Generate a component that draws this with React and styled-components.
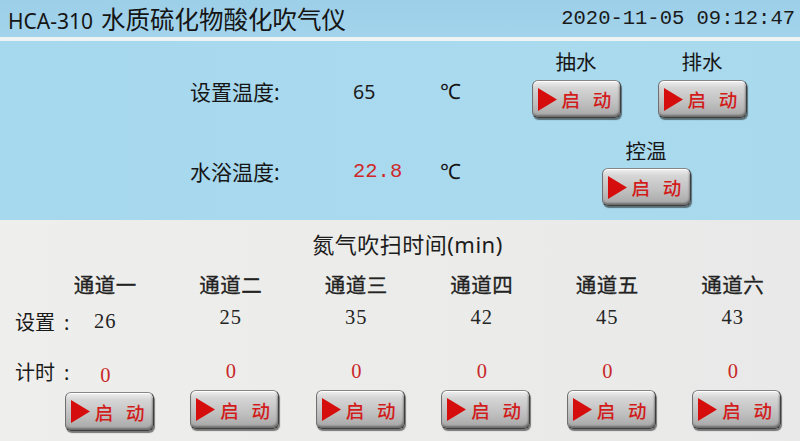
import React from "react";
import styled, { createGlobalStyle } from "styled-components";

const Global = createGlobalStyle`
  html, body { margin: 0; padding: 0; }
  body { width: 800px; height: 441px; overflow: hidden; background: #ecedec; }
`;

const CJK = `"Noto Sans", "Noto Sans CJK SC", sans-serif`;

const Screen = styled.div`
  width: 800px;
  height: 441px;
  display: flex;
  flex-direction: column;
  font-family: ${CJK};
  color: #141414;
`;

const Header = styled.header`
  height: 37px;
  flex: none;
  background: linear-gradient(#9ccfe8, #a3d4ec);
  display: flex;
  align-items: center;
  justify-content: space-between;
  padding: 0 5px 0 8px;
`;

const Title = styled.h1`
  margin: 0;
  font-size: 24.5px;
  font-weight: 400;
  color: #151515;
  white-space: nowrap;
`;

const Model = styled.span`
  font-size: 21px;
  margin-right: 8px;
`;

const Clock = styled.div`
  font-family: "Liberation Mono", monospace;
  font-size: 20.5px;
  color: #1a1a1a;
`;

const Stripe = styled.div`
  height: 4px;
  flex: none;
  background: #eef3f4;
`;

const TopPanel = styled.section`
  height: 179px;
  flex: none;
  background: linear-gradient(90deg, #a6d8ee, #aadaee 70%, #a9d9ec);
  display: flex;
  padding-left: 190px;
`;

const TempGrid = styled.div`
  width: 341px;
  display: grid;
  grid-template-columns: 163px 87px 91px;
  grid-template-rows: 40px 40px;
  row-gap: 40px;
  align-items: center;
  align-content: start;
  padding-top: 30px;
`;

const Label = styled.span`
  font-size: 21px;
  color: #161616;
  white-space: nowrap;
`;

const Reading = styled.span`
  font-family: ${(p) => (p.$mono ? `"Liberation Mono", monospace` : `"Noto Sans", sans-serif`)};
  font-size: ${(p) => (p.$mono ? "20.5px" : "19.5px")};
  color: ${(p) => (p.$alert ? "#d0272a" : "#1b1b1b")};
`;

const Unit = styled.span`
  font-size: 21px;
  color: #161616;
`;

const ControlGrid = styled.div`
  display: grid;
  grid-template-columns: 90px 90px;
  column-gap: 36px;
  row-gap: 22px;
  align-content: start;
  padding-top: 10px;
`;

const Control = styled.div`
  display: flex;
  flex-direction: column;
  align-items: center;
  gap: ${(p) => (p.$wide ? "6px" : "7px")};
  ${(p) => (p.$wide ? "grid-column: 1 / span 2; justify-self: center; margin-left: 14px;" : "")}
`;

const ControlLabel = styled.span`
  font-size: 20.5px;
  line-height: 22px;
  color: #161616;
`;

const StartButton = styled.button`
  width: 89px;
  height: ${(p) => (p.$tall ? "39px" : "38px")};
  padding: 0 0 0 5px;
  box-sizing: border-box;
  border: 1px solid #3e3e3e;
  border-top-color: #858585;
  border-left-color: #707070;
  border-radius: 6px;
  background: linear-gradient(#f0f0f0 0%, #d6d6d6 18%, #c0c0c0 60%, #a6a6a6 100%);
  box-shadow: inset 0 1px 0 #ffffff, inset -1px -2px 2px rgba(0, 0, 0, 0.35),
    1px 2px 1px rgba(40, 40, 40, 0.6);
  display: flex;
  align-items: center;
  gap: 5px;
  font-family: ${CJK};
  cursor: pointer;
`;

const PlayIcon = styled.svg`
  width: 19px;
  height: 23px;
  flex: none;
`;

const StartText = styled.span`
  font-size: 18.5px;
  font-weight: 500;
  letter-spacing: 4px;
  color: #d21c1c;
  white-space: nowrap;
`;

const Start = ({ tall }) => (
  <StartButton $tall={tall}>
    <PlayIcon viewBox="0 0 19 23">
      <polygon points="0,0 19,11.5 0,23" fill="#d60d0d" />
    </PlayIcon>
    <StartText>启 动</StartText>
  </StartButton>
);

const BottomPanel = styled.section`
  flex: 1;
  background: linear-gradient(90deg, #eeeeec, #ebecea 60%, #e8e9e8);
  display: flex;
  flex-direction: column;
  padding-left: 15px;
`;

const SectionTitle = styled.h2`
  margin: 0;
  height: 46px;
  line-height: 48px;
  text-align: center;
  font-size: 22px;
  font-weight: 400;
  letter-spacing: 0.5px;
  color: #1c1c1c;
`;

const ChannelGrid = styled.div`
  display: grid;
  grid-template-columns: 27.5px repeat(6, 125.5px);
  grid-template-rows: 36px 30px 54px 46px;
  justify-items: center;
`;

const RowLabel = styled.span`
  justify-self: start;
  align-self: ${(p) => p.$align || "center"};
  font-size: 20px;
  white-space: nowrap;
  color: #1a1a1a;
  margin-top: ${(p) => p.$shift || 0}px;
`;

const Colon = styled.span`
  margin-left: 9px;
  font-family: "Noto Sans", sans-serif;
`;

const ChannelName = styled.span`
  align-self: center;
  font-size: 20.5px;
  font-weight: 400;
  letter-spacing: 0.5px;
  color: #222;
  -webkit-text-stroke: 0.3px #222;
`;

const SetValue = styled.span`
  align-self: center;
  font-family: "Liberation Serif", serif;
  font-size: 20.5px;
  letter-spacing: 1px;
  color: #252525;
  margin-top: ${(p) => (p.$low ? 8 : 0)}px;
`;

const TimerValue = styled.span`
  align-self: end;
  height: 30px;
  line-height: 30px;
  font-family: "Liberation Serif", serif;
  font-size: 20.5px;
  color: #c9282a;
  margin-bottom: ${(p) => (p.$low ? -4 : 0)}px;
`;

const ButtonCell = styled.div`
  align-self: end;
  margin-left: 8px;
  margin-bottom: ${(p) => (p.$low ? 1 : 3)}px;
`;

const channels = [
  { name: "通道一", set: 26, t: 0 },
  { name: "通道二", set: 25, t: 0 },
  { name: "通道三", set: 35, t: 0 },
  { name: "通道四", set: 42, t: 0 },
  { name: "通道五", set: 45, t: 0 },
  { name: "通道六", set: 43, t: 0 },
];

export default function App() {
  return (
    <>
      <Global />
      <Screen>
        <Header>
          <Title>
            <Model>HCA-310</Model>水质硫化物酸化吹气仪
          </Title>
          <Clock>2020-11-05 09:12:47</Clock>
        </Header>
        <Stripe />
        <TopPanel>
          <TempGrid>
            <Label>设置温度:</Label>
            <Reading>65</Reading>
            <Unit>℃</Unit>
            <Label>水浴温度:</Label>
            <Reading $mono $alert>22.8</Reading>
            <Unit>℃</Unit>
          </TempGrid>
          <ControlGrid>
            <Control>
              <ControlLabel>抽水</ControlLabel>
              <Start />
            </Control>
            <Control>
              <ControlLabel>排水</ControlLabel>
              <Start />
            </Control>
            <Control $wide>
              <ControlLabel>控温</ControlLabel>
              <Start />
            </Control>
          </ControlGrid>
        </TopPanel>
        <BottomPanel>
          <SectionTitle>氮气吹扫时间(min)</SectionTitle>
          <ChannelGrid>
            <span />
            {channels.map((c) => (
              <ChannelName key={c.name}>{c.name}</ChannelName>
            ))}
            <RowLabel $shift={8}>
              设置<Colon>:</Colon>
            </RowLabel>
            {channels.map((c, i) => (
              <SetValue key={c.name} $low={i === 0}>
                {c.set}
              </SetValue>
            ))}
            <RowLabel $align="end">
              计时<Colon>:</Colon>
            </RowLabel>
            {channels.map((c, i) => (
              <TimerValue key={c.name} $low={i === 0}>
                {c.t}
              </TimerValue>
            ))}
            <span />
            {channels.map((c, i) => (
              <ButtonCell key={c.name} $low={i === 0}>
                <Start tall />
              </ButtonCell>
            ))}
          </ChannelGrid>
        </BottomPanel>
      </Screen>
    </>
  );
}
